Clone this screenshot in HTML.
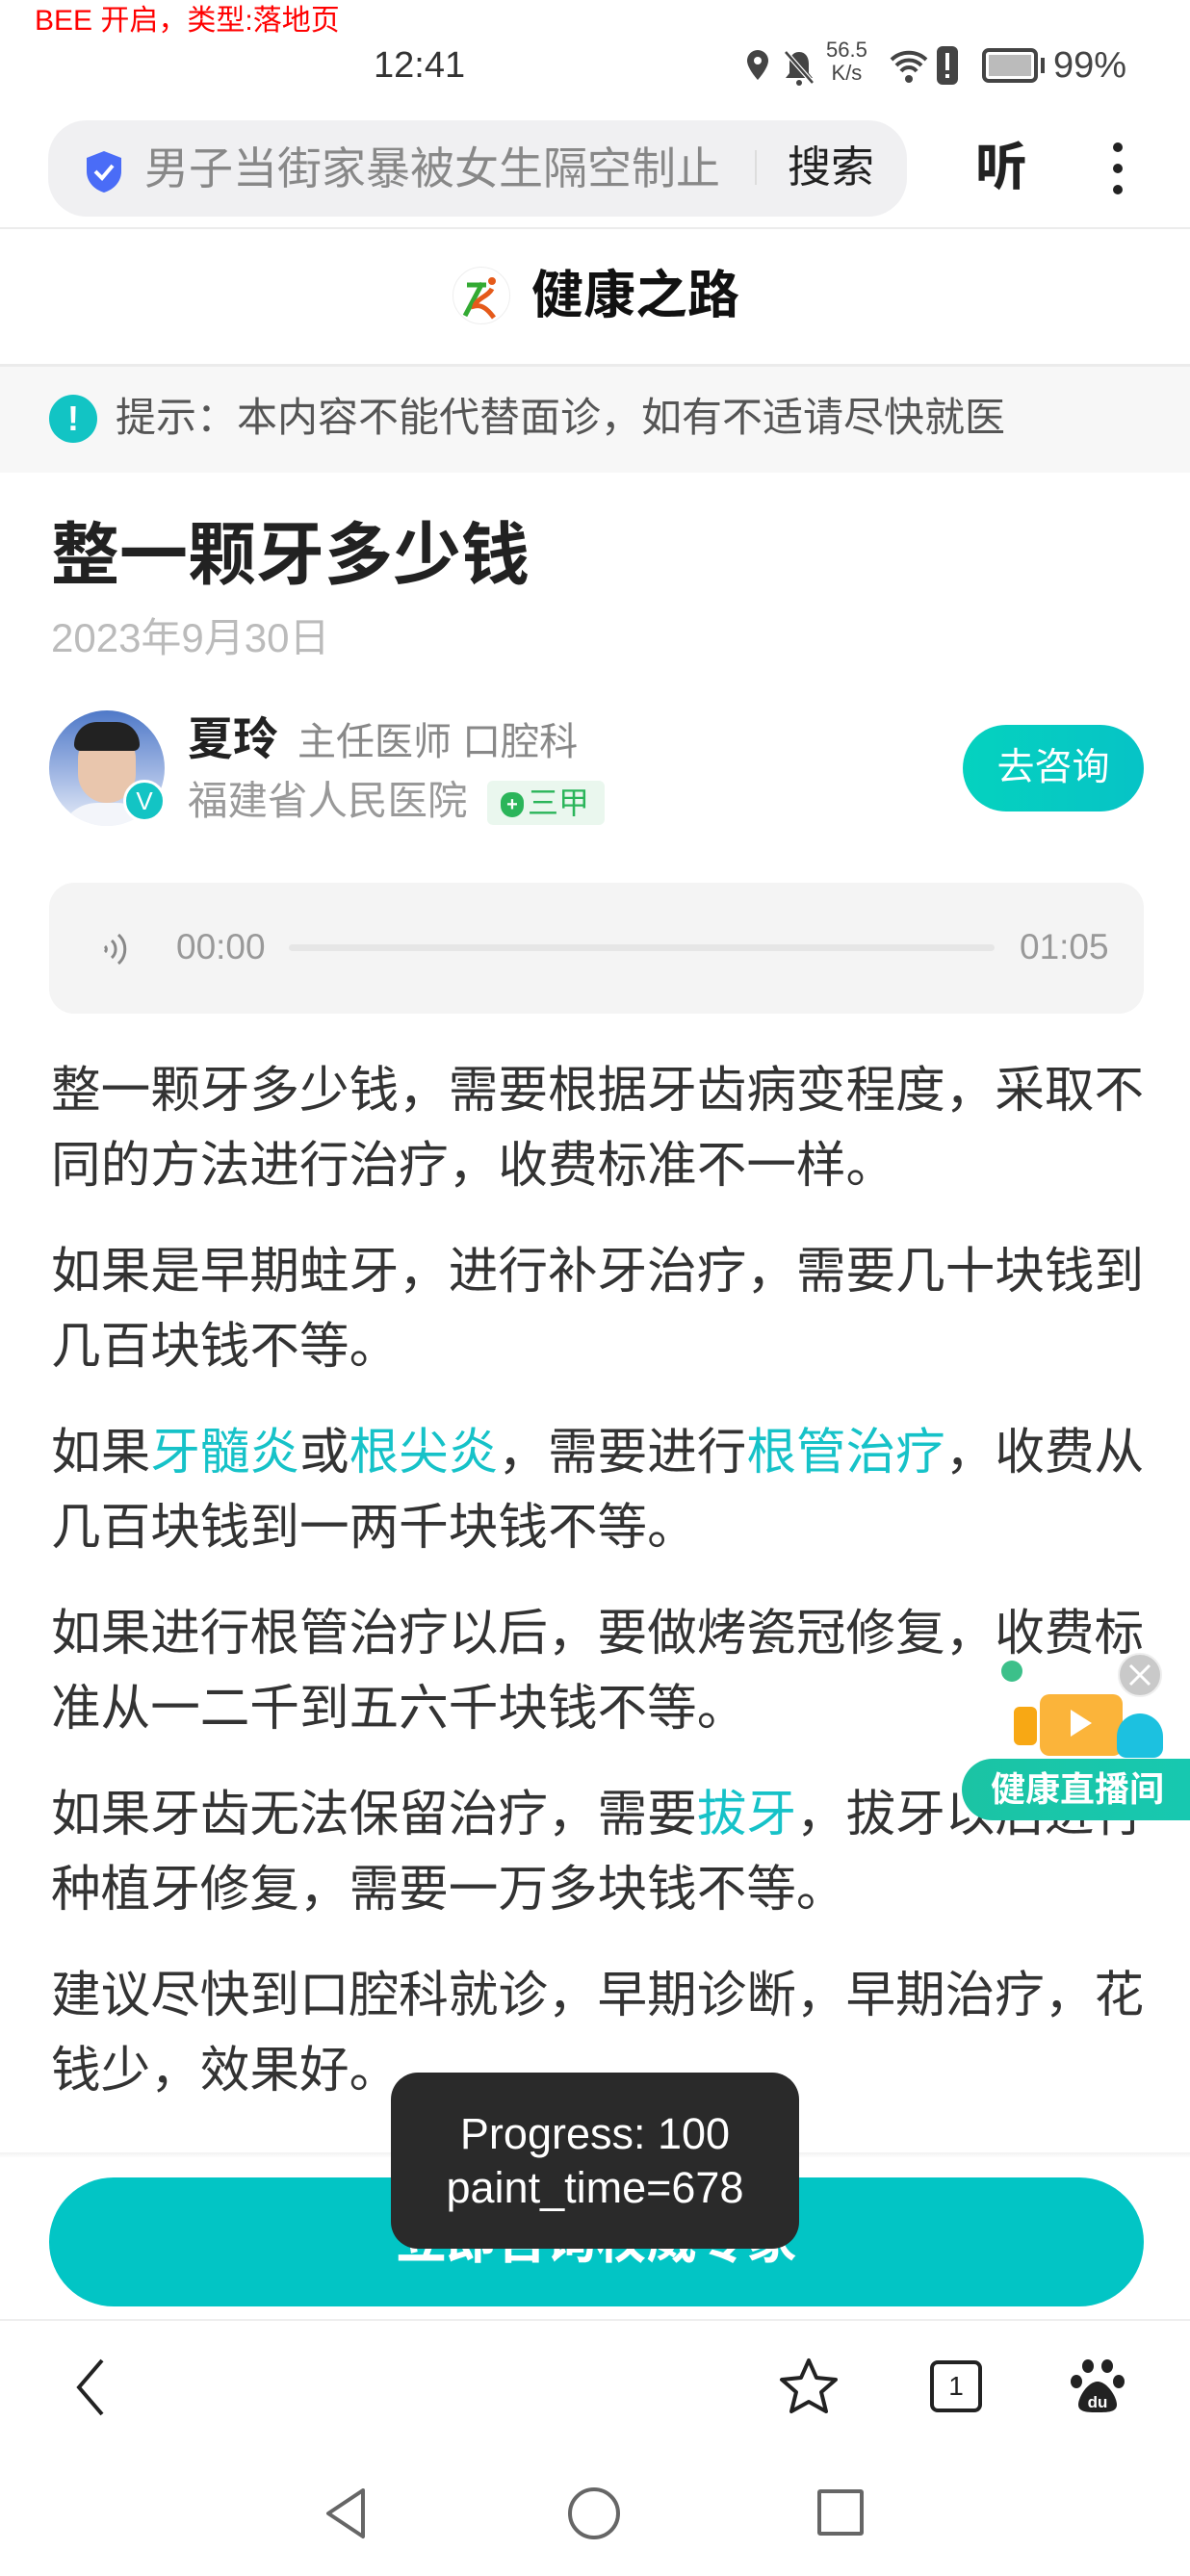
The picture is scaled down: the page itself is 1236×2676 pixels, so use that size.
<!DOCTYPE html>
<html><head><meta charset="utf-8"><style>
*{margin:0;padding:0;box-sizing:border-box}
body{width:1236px;height:2676px;position:relative;overflow:hidden;background:#fff;font-family:"Liberation Sans","Noto Sans CJK SC",sans-serif;color:#333}
.a{position:absolute}
p.t{position:absolute;left:53px;width:1150px;font-size:51.6px;line-height:78px;color:#333;white-space:nowrap}
.l{color:#16c2c8}
</style></head><body>
<div class="a" style="left:36px;top:2px;font-size:30px;color:#f00;line-height:40px">BEE 开启，类型:落地页</div>
<div class="a" style="left:388px;top:44px;font-size:38px;color:#333;line-height:48px">12:41</div>
<div class="a" style="left:772px;top:50px;width:30px;height:40px">
<svg width="30" height="40" viewBox="0 0 30 40"><path d="M15 2a11 11 0 0 0-11 11c0 8 11 20 11 20s11-12 11-20A11 11 0 0 0 15 2z" fill="#444"/><circle cx="15" cy="13" r="4" fill="#fff"/></svg></div>
<div class="a" style="left:812px;top:50px"><svg width="36" height="42" viewBox="0 0 36 42"><path d="M18 4c-7 0-10 6-10 12v10l-4 5h28l-4-5V16c0-6-3-12-10-12z" fill="#444"/><circle cx="18" cy="36" r="3" fill="#444"/><path d="M4 4l28 32" stroke="#fff" stroke-width="5"/><path d="M4 4l28 32" stroke="#444" stroke-width="2.5"/></svg></div>
<div class="a" style="left:858px;top:40px;font-size:22px;line-height:24px;color:#444;text-align:center">56.5<br>K/s</div>
<div class="a" style="left:922px;top:46px"><svg width="44" height="44" viewBox="0 0 44 44"><path d="M4 16a26 26 0 0 1 36 0M9 22a18 18 0 0 1 26 0M14 28a10 10 0 0 1 16 0" stroke="#444" stroke-width="4" fill="none"/><circle cx="22" cy="36" r="4" fill="#444"/></svg></div>
<div class="a" style="left:973px;top:48px;width:22px;height:40px;background:#444;border-radius:6px"><div style="position:absolute;left:9px;top:7px;width:4px;height:18px;background:#fff"></div><div style="position:absolute;left:9px;top:29px;width:4px;height:4px;background:#fff"></div></div>
<div class="a" style="left:1020px;top:50px;width:58px;height:36px;border:4px solid #444;border-radius:7px;background:#fff"><div style="position:absolute;left:3px;top:3px;width:44px;height:22px;background:#bbb"></div></div>
<div class="a" style="left:1081px;top:60px;width:4px;height:16px;background:#444"></div>
<div class="a" style="left:1094px;top:44px;font-size:38px;line-height:48px;color:#444">99%</div>

<div class="a" style="left:50px;top:125px;width:892px;height:100px;background:#f0f0f2;border-radius:40px"></div>
<div class="a" style="left:86px;top:155px"><svg width="44" height="46" viewBox="0 0 44 46"><path d="M22 2L4 9v14c0 11 8 19 18 22 10-3 18-11 18-22V9z" fill="#4a6cf7"/><path d="M13 23l7 7 11-13" stroke="#fff" stroke-width="4" fill="none"/></svg></div>
<div class="a" style="left:150px;top:146px;font-size:46px;line-height:58px;color:#888">男子当街家暴被女生隔空制止</div>
<div class="a" style="left:784px;top:156px;width:2px;height:36px;background:#ddd"></div>
<div class="a" style="left:818px;top:146px;font-size:45px;line-height:56px;color:#222">搜索</div>
<div class="a" style="left:1013px;top:144px;font-size:54px;line-height:60px;color:#222;font-weight:bold">听</div>
<div class="a" style="left:1156px;top:148px;width:10px;height:10px;border-radius:5px;background:#222"></div>
<div class="a" style="left:1156px;top:170px;width:10px;height:10px;border-radius:5px;background:#222"></div>
<div class="a" style="left:1156px;top:192px;width:10px;height:10px;border-radius:5px;background:#222"></div>
<div class="a" style="left:0;top:236px;width:1236px;height:2px;background:#ececec"></div>

<div class="a" style="left:470px;top:277px;width:60px;height:60px;border-radius:30px;border:1px solid #eee"><svg width="60" height="60" viewBox="0 0 60 60"><path d="M14 18h20M30 16l-18 34" stroke="#3a3" stroke-width="5" fill="none"/><circle cx="40" cy="14" r="4" fill="#e55a1a"/><path d="M40 22c-4 8-16 10-18 18 8-2 14 4 20 12" stroke="#e55a1a" stroke-width="5" fill="none"/></svg></div>
<div class="a" style="left:552px;top:276px;font-size:54px;font-weight:bold;line-height:62px;color:#111">健康之路</div>
<div class="a" style="left:0;top:378px;width:1236px;height:3px;background:#ebebeb"></div>
<div class="a" style="left:0;top:381px;width:1236px;height:110px;background:#f7f7f7"></div>
<div class="a" style="left:51px;top:410px;width:50px;height:50px;border-radius:25px;background:#12c4c4;color:#fff;font-size:36px;font-weight:bold;text-align:center;line-height:50px">!</div>
<div class="a" style="left:120px;top:407px;font-size:42px;line-height:54px;color:#555">提示：本内容不能代替面诊，如有不适请尽快就医</div>

<div class="a" style="left:53px;top:535px;font-size:71px;font-weight:bold;line-height:86px;color:#222">整一颗牙多少钱</div>
<div class="a" style="left:53px;top:638px;font-size:42px;line-height:50px;color:#bbb">2023年9月30日</div>

<div class="a" style="left:51px;top:738px;width:120px;height:120px;border-radius:60px;background:linear-gradient(#4f79c8,#a9bde6 60%,#e8eef8);overflow:hidden">
<div style="position:absolute;left:30px;top:20px;width:60px;height:76px;border-radius:30px;background:#e9c6ad"></div>
<div style="position:absolute;left:26px;top:12px;width:68px;height:30px;border-radius:30px 30px 8px 8px;background:#222"></div>
<div style="position:absolute;left:10px;top:96px;width:100px;height:40px;border-radius:40px 40px 0 0;background:#f3f5fa"></div></div>
<div class="a" style="left:128px;top:810px;width:44px;height:44px;border-radius:22px;background:#13c4c4;border:3px solid #fff;color:#fff;font-size:26px;text-align:center;line-height:38px">V</div>
<div class="a" style="left:195px;top:740px;font-size:47px;font-weight:bold;line-height:56px;color:#222">夏玲</div>
<div class="a" style="left:309px;top:745px;font-size:40px;line-height:52px;color:#888">主任医师 口腔科</div>
<div class="a" style="left:195px;top:806px;font-size:41.5px;line-height:52px;color:#999">福建省人民医院</div>
<div class="a" style="left:506px;top:811px;width:122px;height:46px;border-radius:6px;background:#eaf7ee"></div>
<div class="a" style="left:520px;top:823px;width:24px;height:26px;border-radius:12px 12px 14px 14px;background:#2bb55a;color:#fff;font-size:20px;line-height:26px;text-align:center;font-weight:bold">+</div>
<div class="a" style="left:548px;top:812px;font-size:32px;line-height:44px;color:#2bb55a">三甲</div>
<div class="a" style="left:1000px;top:753px;width:188px;height:90px;border-radius:45px;background:linear-gradient(90deg,#05d2bf,#06c3c6);color:#fff;font-size:39px;text-align:center;line-height:90px">去咨询</div>

<div class="a" style="left:51px;top:917px;width:1137px;height:136px;border-radius:26px;background:#f4f4f4"></div>
<div class="a" style="left:103px;top:966px"><svg width="34" height="40" viewBox="0 0 34 40"><path d="M6 17a4 4 0 0 1 0 6M13 11a12 12 0 0 1 0 18M20 5a20 20 0 0 1 0 30" stroke="#888" stroke-width="3" fill="none"/></svg></div>
<div class="a" style="left:183px;top:961px;font-size:37px;line-height:46px;color:#999">00:00</div>
<div class="a" style="left:300px;top:981px;width:733px;height:7px;border-radius:4px;background:#e6e6e6"></div>
<div class="a" style="left:1059px;top:961px;font-size:37px;line-height:46px;color:#999">01:05</div>

<p class="t" style="top:1093px">整一颗牙多少钱，需要根据牙齿病变程度，采取不<br>同的方法进行治疗，收费标准不一样。</p>
<p class="t" style="top:1281px">如果是早期蛀牙，进行补牙治疗，需要几十块钱到<br>几百块钱不等。</p>
<p class="t" style="top:1469px">如果<span class="l">牙髓炎</span>或<span class="l">根尖炎</span>，需要进行<span class="l">根管治疗</span>，收费从<br>几百块钱到一两千块钱不等。</p>
<p class="t" style="top:1657px">如果进行根管治疗以后，要做烤瓷冠修复，收费标<br>准从一二千到五六千块钱不等。</p>
<p class="t" style="top:1845px">如果牙齿无法保留治疗，需要<span class="l">拔牙</span>，拔牙以后进行<br>种植牙修复，需要一万多块钱不等。</p>
<p class="t" style="top:2033px">建议尽快到口腔科就诊，早期诊断，早期治疗，花<br>钱少，效果好。</p>

<!-- live widget -->
<div class="a" style="left:1040px;top:1725px;width:22px;height:22px;border-radius:11px;background:#3cc08a"></div>
<div class="a" style="left:1053px;top:1773px;width:24px;height:40px;border-radius:6px;background:#f8a814"></div>
<div class="a" style="left:1080px;top:1760px;width:86px;height:64px;border-radius:10px;background:#fbb43a"></div>
<div class="a" style="left:1112px;top:1776px;width:0;height:0;border-left:22px solid #fff;border-top:14px solid transparent;border-bottom:14px solid transparent"></div>
<div class="a" style="left:1160px;top:1780px;width:48px;height:46px;border-radius:24px 24px 10px 10px;background:#1cc1e0"></div>
<div class="a" style="left:999px;top:1827px;width:237px;height:64px;border-radius:32px 0 0 32px;background:linear-gradient(90deg,#1bc4a4,#17c8b0);color:#fff;font-size:36px;font-weight:bold;line-height:64px;padding-left:30px">健康直播间</div>
<div class="a" style="left:1161px;top:1717px;width:46px;height:46px;border-radius:23px;background:#c9c9c9;border:2px solid #eee"><svg width="42" height="42" viewBox="0 0 42 42"><path d="M11 11l20 20M31 11L11 31" stroke="#fff" stroke-width="3"/></svg></div>

<!-- bottom -->
<div class="a" style="left:0;top:2236px;width:1236px;height:6px;background:linear-gradient(#f2f2f2,#fff)"></div>
<div class="a" style="left:51px;top:2262px;width:1137px;height:134px;border-radius:67px;background:#02c5c5;color:#fff;font-size:52px;font-weight:bold;text-align:center;line-height:134px">立即咨询权威专家</div>
<div class="a" style="left:406px;top:2153px;width:424px;height:183px;border-radius:28px;background:#2a2a2a;color:#fff;font-size:45px;line-height:56px;text-align:center;padding-top:36px">Progress: 100<br>paint_time=678</div>
<div class="a" style="left:0;top:2409px;width:1236px;height:2px;background:#eee"></div>
<div class="a" style="left:74px;top:2448px"><svg width="40" height="64" viewBox="0 0 40 64"><path d="M32 4L8 32l24 28" stroke="#222" stroke-width="4" fill="none"/></svg></div>
<div class="a" style="left:808px;top:2448px"><svg width="64" height="62" viewBox="0 0 64 62"><path d="M32 4l8 18 20 2-15 13 5 20-18-10-18 10 5-20L4 24l20-2z" stroke="#222" stroke-width="4" fill="none" stroke-linejoin="round"/></svg></div>
<div class="a" style="left:966px;top:2452px;width:54px;height:54px;border:4px solid #222;border-radius:8px;font-size:28px;text-align:center;line-height:46px;color:#222">1</div>
<div class="a" style="left:1112px;top:2450px"><svg width="56" height="58" viewBox="0 0 56 58"><ellipse cx="18" cy="8" rx="6" ry="7" fill="#222"/><ellipse cx="38" cy="8" rx="6" ry="7" fill="#222"/><ellipse cx="6" cy="24" rx="6" ry="7" fill="#222"/><ellipse cx="50" cy="24" rx="6" ry="7" fill="#222"/><path d="M28 24c-10 0-20 16-20 24 0 8 10 8 20 8s20 0 20-8c0-8-10-24-20-24z" fill="#222"/><text x="28" y="51" font-size="17" fill="#fff" text-anchor="middle" font-family="Liberation Sans" font-weight="bold">du</text></svg></div>
<div class="a" style="left:335px;top:2583px"><svg width="48" height="56" viewBox="0 0 48 56"><path d="M42 4L6 28l36 24z" stroke="#666" stroke-width="4" fill="none" stroke-linejoin="round"/></svg></div>
<div class="a" style="left:590px;top:2584px;width:54px;height:54px;border:4px solid #666;border-radius:50%"></div>
<div class="a" style="left:849px;top:2586px;width:48px;height:48px;border:4px solid #666;border-radius:3px"></div>
</body></html>
